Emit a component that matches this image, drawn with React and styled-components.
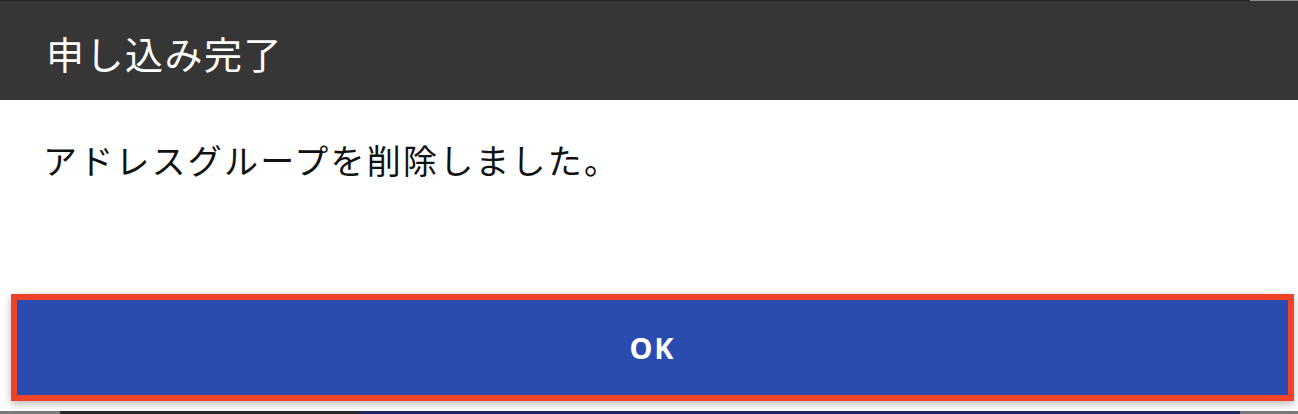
import React from "react";
import styled, { createGlobalStyle } from "styled-components";

const GlobalStyle = createGlobalStyle`
  html, body {
    margin: 0;
    padding: 0;
    background: #ffffff;
  }
  body {
    font-family: "Noto Sans CJK JP", "Noto Sans", sans-serif;
  }
`;

const Screen = styled.div`
  width: 1298px;
  height: 414px;
  display: flex;
  flex-direction: column;
  overflow: hidden;
  background: #ffffff;
`;

const Strip = styled.div`
  display: flex;
  height: ${p => p.h}px;
  flex-shrink: 0;
`;

const Segment = styled.div`
  width: ${p => (p.w ? `${p.w}px` : "auto")};
  flex: ${p => (p.w ? "0 0 auto" : "1")};
  background: ${p => p.color};
`;

const Header = styled.header`
  height: 99px;
  background: #363636;
  display: flex;
  align-items: center;
  padding-left: 46px;
  flex-shrink: 0;
`;

const Title = styled.h1`
  margin: 0;
  color: #ffffff;
  font-size: 38px;
  font-weight: 400;
  letter-spacing: 1.5px;
  line-height: 1;
  padding-top: 4px;
`;

const Body = styled.main`
  flex: 1;
  display: flex;
  flex-direction: column;
  padding: 0 4px 0 11px;
`;

const Message = styled.p`
  margin: 0;
  padding: 40px 0 0 32px;
  height: 194px;
  box-sizing: border-box;
  font-size: 34px;
  letter-spacing: 2.2px;
  line-height: 1.15;
  color: #111111;
`;

const OkButton = styled.button`
  width: 1283px;
  height: 107px;
  box-sizing: border-box;
  border: 6px solid #ee4328;
  background: #2a4bb0;
  color: #ffffff;
  font-family: "Noto Sans", Roboto, sans-serif;
  font-size: 29px;
  font-weight: 700;
  letter-spacing: 2px;
  box-shadow: 0 3px 8px rgba(0, 0, 0, 0.28);
  cursor: pointer;
  padding: 0;
`;

const Spacer = styled.div`
  flex: 1;
`;

export default function App() {
  return (
    <>
      <GlobalStyle />
      <Screen>
        <Strip h={1}>
          <Segment color="#242424" />
          <Segment w={48} color="#8a8a8a" />
        </Strip>
        <Header>
          <Title>申し込み完了</Title>
        </Header>
        <Body>
          <Message>アドレスグループを削除しました。</Message>
          <OkButton>OK</OkButton>
          <Spacer />
        </Body>
        <Strip h={3}>
          <Segment w={60} color="#7a7a7a" />
          <Segment w={300} color="#2b2b2b" />
          <Segment color="#1a2660" />
          <Segment w={58} color="#7a7a7a" />
        </Strip>
      </Screen>
    </>
  );
}
